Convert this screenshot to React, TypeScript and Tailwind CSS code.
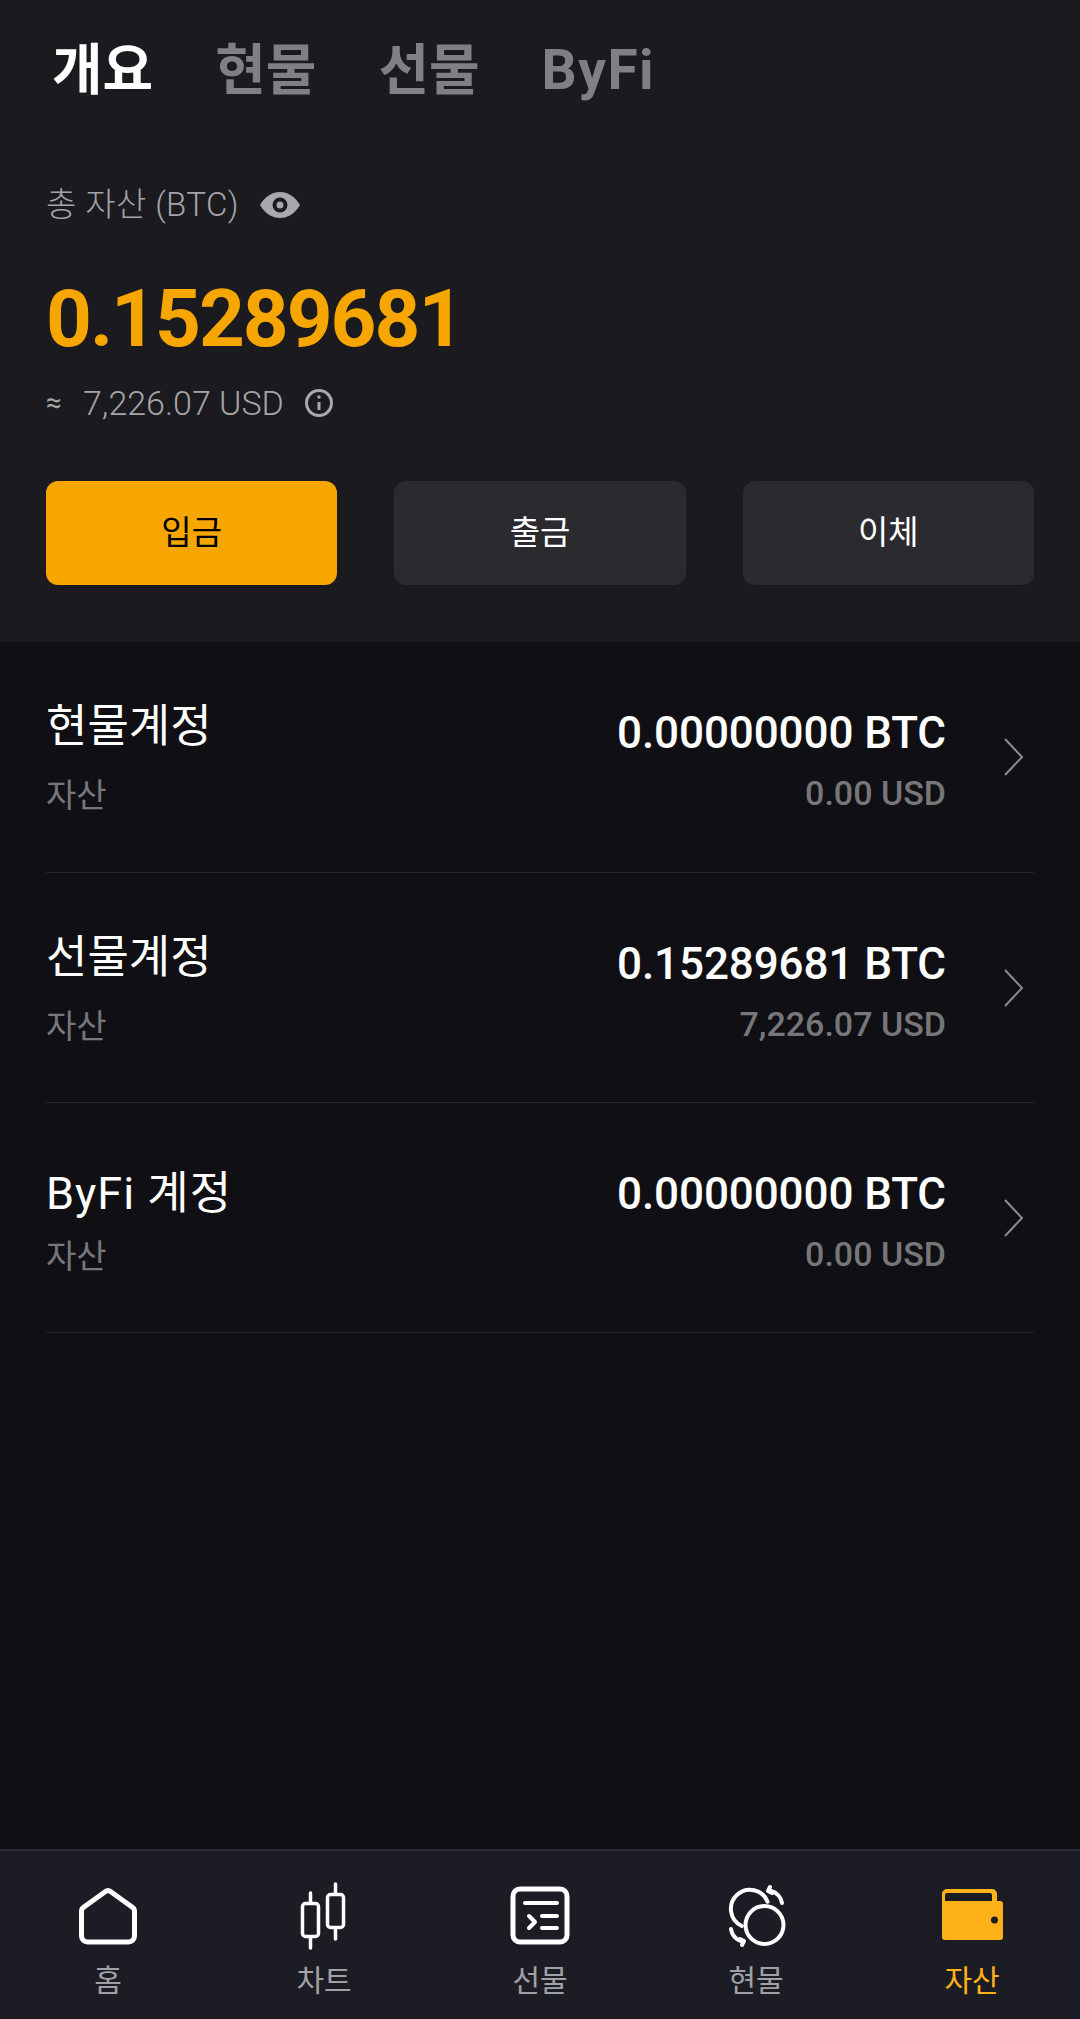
import React from 'react';

const accounts = [
  { name: '현물계정', btc: '0.00000000 BTC', usd: '0.00 USD', nameClass: 'pt-[60px]', subClass: 'mt-[24px]' },
  { name: '선물계정', btc: '0.15289681 BTC', usd: '7,226.07 USD', nameClass: 'pt-[60px]', subClass: 'mt-[24px]' },
  { name: 'ByFi 계정', btc: '0.00000000 BTC', usd: '0.00 USD', nameClass: 'pt-[66px] tracking-[1px]', subClass: 'mt-[18px]' },
];

function HomeIcon() {
  return (
    <svg viewBox="0 0 72 72" className="w-[72px] h-[72px]" fill="none" stroke="#fff" strokeWidth="5" strokeLinejoin="round">
      <path d="M33.5 11.5a4 4 0 0 1 5 0L60 27a5 5 0 0 1 2.500 4v25a6 6 0 0 1-6 6H15.500a6 6 0 0 1-6-6V31a5 5 0 0 1 2.500-4Z" />
    </svg>
  );
}

function ChartIcon() {
  return (
    <svg viewBox="0 0 72 72" className="w-[72px] h-[72px]" fill="none" stroke="#fff" strokeWidth="3.500" strokeLinecap="round">
      <rect x="14.500" y="23.500" width="16" height="33" rx="3" />
      <rect x="39.500" y="14.500" width="16" height="33" rx="3" />
      <path d="M22.500 13v10M22.500 57v11M47.500 4v10M47.500 48v11" />
    </svg>
  );
}

function FuturesIcon() {
  return (
    <svg viewBox="0 0 72 72" className="w-[72px] h-[72px]" fill="none" stroke="#fff" strokeWidth="4" strokeLinecap="round" strokeLinejoin="round">
      <rect x="9" y="9" width="54" height="53" rx="7" strokeWidth="5" />
      <path d="M21 23h32M38 36h15M38 48h15M25 36l6 6-6 6" />
    </svg>
  );
}

function SpotIcon() {
  return (
    <svg viewBox="0 0 72 72" className="w-[72px] h-[72px]" fill="none" stroke="#fff" strokeWidth="4" strokeLinecap="round" strokeLinejoin="round">
      <circle cx="44.500" cy="45" r="19" />
      <path d="M47.500 21.700A19 19 0 1 0 21.700 46" />
      <path d="M51 11a15 15 0 0 1 11 12" />
      <path d="M21 61a15 15 0 0 1-10-12" />
      <path d="M50 7l-2 4 4 2" />
      <path d="M22 65l2-4-4-2" />
    </svg>
  );
}

function WalletIcon() {
  return (
    <svg viewBox="0 0 72 72" className="w-[72px] h-[72px]">
      <path fillRule="evenodd" fill="#ffb11a" d="M11 9h45a5 5 0 0 1 5 5v7h3a3 3 0 0 1 3 3v33a3 3 0 0 1-3 3H9a3 3 0 0 1-3-3V14a5 5 0 0 1 5-5Zm0 4a2 2 0 0 0-2 2v6h47v-6a2 2 0 0 0-2-2Zm47.500 23.500a3.500 3.500 0 1 0 0 7 3.500 3.500 0 0 0 0-7Z" />
    </svg>
  );
}

const navItems = [
  { label: '홈', icon: <HomeIcon />, active: false },
  { label: '차트', icon: <ChartIcon />, active: false },
  { label: '선물', icon: <FuturesIcon />, active: false },
  { label: '현물', icon: <SpotIcon />, active: false },
  { label: '자산', icon: <WalletIcon />, active: true },
];

export default function App() {
  return (
    <div className="flex flex-col h-[2019px] w-[1080px] bg-[#101014] font-['Roboto','Noto_Sans_CJK_KR',sans-serif] overflow-hidden">
      {/* Summary */}
      <header className="h-[642px] bg-[#1a1a1f]">
        <nav className="flex items-center h-[139px] pt-[2px] pl-[52px] gap-[62px] border-b border-[#17171b] text-[55px] font-bold leading-[60px] text-[#808083]">
          <span className="text-white">개요</span>
          <span>현물</span>
          <span>선물</span>
          <span className="tracking-[1.5px]">ByFi</span>
        </nav>

        <div className="px-[46px]">
          <div className="flex items-center mt-[46px] h-[40px] text-[33px] tracking-[0.4px] font-light text-[#a5a5a9]">
            <span>총 자산 (BTC)</span>
            <svg viewBox="0 0 40 28" className="w-[40px] h-[28px] ml-[21px]">
              <path fillRule="evenodd" fill="#a9a9ad" d="M20 1C11 1 4 7 0 14c4 7 11 13 20 13s16-6 20-13C36 7 29 1 20 1Zm0 5.500a7.500 7.500 0 1 1 0 15 7.500 7.500 0 0 1 0-15Zm0 4a3.500 3.500 0 1 0 0 7 3.500 3.500 0 0 0 0-7Z" />
            </svg>
          </div>

          <div className="mt-[54px] h-[80px] leading-[80px] text-[80px] font-bold tracking-[-2px] text-[#f7a600]">0.15289681</div>

          <div className="flex items-center mt-[24px] h-[40px] text-[34px] font-light text-[#a5a5a9]">
            <span className="w-[37px] text-[28px] font-normal">≈</span>
            <span>7,226.07 USD</span>
            <svg viewBox="0 0 30 30" className="w-[30px] h-[30px] ml-[20px]" fill="none" stroke="#a9a9ad" strokeWidth="3">
              <circle cx="15" cy="15" r="12.500" />
              <path d="M15 14v8" />
              <circle cx="15" cy="9" r="1" fill="#a9a9ad" strokeWidth="1.500" />
            </svg>
          </div>

          <div className="grid grid-cols-3 gap-[57px] mt-[58px] text-[33px]">
            <button className="h-[104px] rounded-[12px] bg-[#f7a600] text-black">입금</button>
            <button className="h-[104px] rounded-[12px] bg-[#2a2a2f] text-white">출금</button>
            <button className="h-[104px] rounded-[12px] bg-[#2a2a2f] text-white">이체</button>
          </div>
        </div>
      </header>

      {/* Accounts */}
      <main className="flex-1 px-[46px]">
        {accounts.map((a) => (
          <div key={a.name} className="flex items-center justify-between h-[230px] border-b border-[#24252b] first:h-[231px]">
            <div className={`flex flex-col self-start ${a.nameClass}`}>
              <span className="text-[45px] leading-[50px] text-white">{a.name}</span>
              <span className={`${a.subClass} text-[33px] tracking-normal leading-[40px] text-[#77777b]`}>자산</span>
            </div>
            <div className="flex items-center">
              <div className="flex flex-col items-end self-start pt-[66px] h-[230px]">
                <span className="text-[44px] leading-[50px] tracking-[-0.1px] font-medium text-white">{a.btc}</span>
                <span className="mt-[15px] text-[34px] leading-[40px] font-medium text-[#77777b]">{a.usd}</span>
              </div>
              <svg viewBox="0 0 20 38" className="w-[20px] h-[38px] ml-[58px] mr-[10px]" fill="none" stroke="#8c8c90" strokeWidth="2">
                <path d="M1 1l17 18L1 37" />
              </svg>
            </div>
          </div>
        ))}
      </main>

      {/* Bottom nav */}
      <footer className="grid grid-cols-5 h-[170px] bg-[#1c1d24] border-t-2 border-[#2e2f35]">
        {navItems.map((item) => (
          <div key={item.label} className="flex flex-col items-center pt-[29px]">
            {item.icon}
            <span className={`mt-[9px] text-[30px] leading-[40px] ${item.active ? 'text-[#ffb11a]' : 'text-[#a0a0a5]'}`}>{item.label}</span>
          </div>
        ))}
      </footer>
    </div>
  );
}
